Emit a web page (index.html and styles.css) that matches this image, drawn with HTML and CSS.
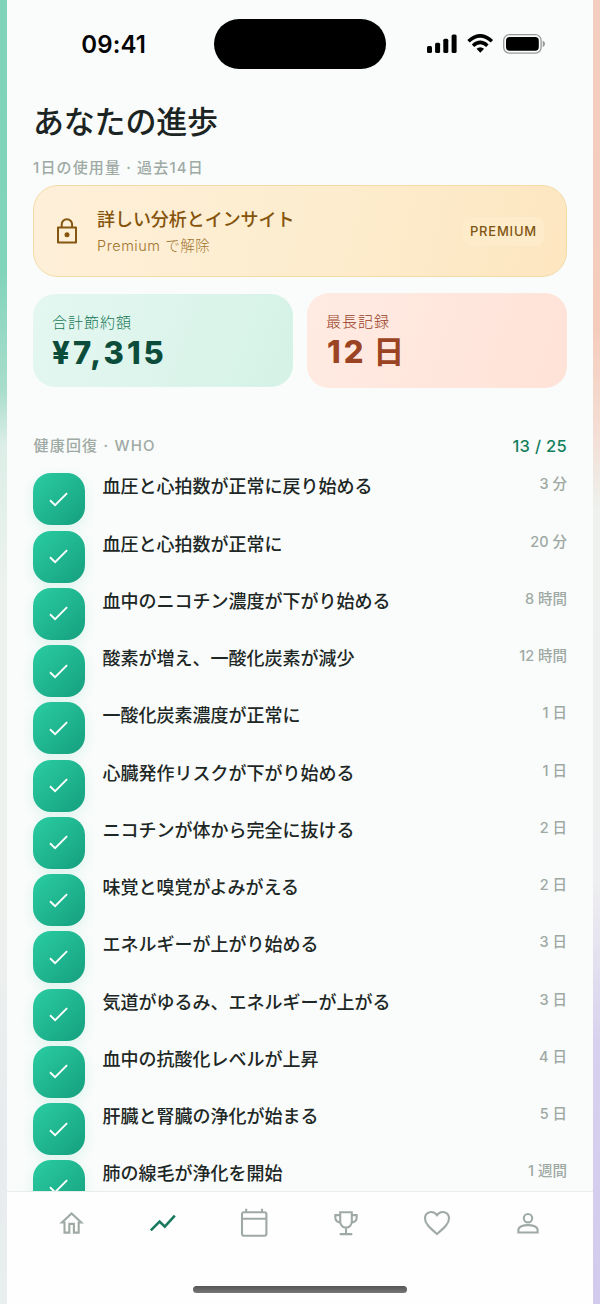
FILE: index.html
```html
<!DOCTYPE html>
<html lang="ja">
<head>
<meta charset="utf-8">
<title>あなたの進歩</title>
<link rel="stylesheet" href="styles.css">
</head>
<body>
<svg class="defs" aria-hidden="true"><symbol id="check" viewBox="0 0 20 16"><path d="M1 8.2 6.1 13.2 18.1 1.2" fill="none" stroke="#fff" stroke-width="1.9"/></symbol></svg>
<div class="phone">
  <header class="status">
    <div class="clock">09:41</div>
    <div class="island"></div>
    <div class="signals">
      <svg width="31" height="20" viewBox="0 0 31 20"><rect x="0" y="12" width="5" height="7" rx="1.5"/><rect x="8.1" y="8.7" width="5" height="10.3" rx="1.5"/><rect x="16.3" y="4.7" width="5" height="14.3" rx="1.5"/><rect x="24.6" y=".4" width="5" height="18.6" rx="1.5"/></svg>
      <svg class="wifi" width="27" height="20" viewBox="0 0 27 20"><path d="M1.5 7.2Q13.2-3.6 24.9 7.2M6 11.7Q13.2 5.2 20.4 11.7" fill="none" stroke="#000" stroke-width="3.5"/><path d="M9.5 14.8Q13.3 11.5 17.1 14.8L13.3 18.8Z"/></svg>
      <svg class="battery" width="43" height="20" viewBox="0 0 43 20"><rect x=".7" y=".7" width="37.4" height="18.4" rx="5.6" fill="none" stroke="#999" stroke-width="1.3"/><rect x="3" y="3" width="32.8" height="13.8" rx="3.7"/><path d="M39.7 6.8c3 .8 3 5.3 0 6.1z" fill="#999"/></svg>
    </div>
  </header>
  <main class="content">
    <h1 class="title">あなたの進歩</h1>
    <p class="subtitle">1日の使用量 · 過去14日</p>
    <section class="premium">
      <svg class="lock" width="20" height="26" viewBox="0 0 20 26"><path d="M1 9.6h18v14.8H1zM4.700 9.500V6.400a5.200 5.200 0 0 1 10.400 0v3.100" fill="none" stroke="#85560f" stroke-width="2" stroke-linejoin="round"/><circle cx="10" cy="16.8" r="2.5" fill="#85560f"/></svg>
      <div class="premium-copy">
        <div class="premium-title">詳しい分析とインサイト</div>
        <div class="premium-sub">Premium で解除</div>
      </div>
      <span class="badge">PREMIUM</span>
    </section>
    <section class="stats">
      <div class="stat saved"><div class="stat-label">合計節約額</div><div class="stat-value">¥7,315</div></div>
      <div class="stat record"><div class="stat-label">最長記録</div><div class="stat-value">12 <span class="unit">日</span></div></div>
    </section>
    <div class="section-head"><h2 class="section-title">健康回復 · WHO</h2><span class="count">13 / 25</span></div>
    <ul class="list">
      <li class="row"><span class="tile"><svg class="tick"><use href="#check"/></svg></span><span class="name">血圧と心拍数が正常に戻り始める</span><span class="time">3 分</span></li>
      <li class="row"><span class="tile"><svg class="tick"><use href="#check"/></svg></span><span class="name">血圧と心拍数が正常に</span><span class="time">20 分</span></li>
      <li class="row"><span class="tile"><svg class="tick"><use href="#check"/></svg></span><span class="name">血中のニコチン濃度が下がり始める</span><span class="time">8 時間</span></li>
      <li class="row"><span class="tile"><svg class="tick"><use href="#check"/></svg></span><span class="name">酸素が増え、一酸化炭素が減少</span><span class="time">12 時間</span></li>
      <li class="row"><span class="tile"><svg class="tick"><use href="#check"/></svg></span><span class="name">一酸化炭素濃度が正常に</span><span class="time">1 日</span></li>
      <li class="row"><span class="tile"><svg class="tick"><use href="#check"/></svg></span><span class="name">心臓発作リスクが下がり始める</span><span class="time">1 日</span></li>
      <li class="row"><span class="tile"><svg class="tick"><use href="#check"/></svg></span><span class="name">ニコチンが体から完全に抜ける</span><span class="time">2 日</span></li>
      <li class="row"><span class="tile"><svg class="tick"><use href="#check"/></svg></span><span class="name">味覚と嗅覚がよみがえる</span><span class="time">2 日</span></li>
      <li class="row"><span class="tile"><svg class="tick"><use href="#check"/></svg></span><span class="name">エネルギーが上がり始める</span><span class="time">3 日</span></li>
      <li class="row"><span class="tile"><svg class="tick"><use href="#check"/></svg></span><span class="name">気道がゆるみ、エネルギーが上がる</span><span class="time">3 日</span></li>
      <li class="row"><span class="tile"><svg class="tick"><use href="#check"/></svg></span><span class="name">血中の抗酸化レベルが上昇</span><span class="time">4 日</span></li>
      <li class="row"><span class="tile"><svg class="tick"><use href="#check"/></svg></span><span class="name">肝臓と腎臓の浄化が始まる</span><span class="time">5 日</span></li>
      <li class="row"><span class="tile"><svg class="tick"><use href="#check"/></svg></span><span class="name">肺の線毛が浄化を開始</span><span class="time">1 週間</span></li>
    </ul>
  </main>
  <nav class="tabs">
    <div class="tab-row">
      <a class="tab"><svg class="tab-icon" viewBox="0 0 32 32"><path d="M5.900 15.500h2.600v10.100h4.800v-8.700h4.600v8.700h4.800V15.500h2.600L15.600 6.400z"/></svg></a>
      <a class="tab active"><svg class="tab-icon" viewBox="0 0 32 32"><path d="m3.800 23.300 8.800-8.800 5.200 5.200L27.800 8.600" stroke-width="2.6"/></svg></a>
      <a class="tab"><svg class="tab-icon" viewBox="0 0 32 32"><rect x="4" y="5.2" width="24.4" height="23.6" rx="2"/><path d="M4 11.800h24.400M8.200 1.800v3.500M24 1.800v3.500"/></svg></a>
      <a class="tab"><svg class="tab-icon" viewBox="0 0 32 32"><path d="M10.200 5.200h11.600v9.600a5.800 5.800 0 0 1-11.600 0zM10.200 8.100H5.300v2.200c0 3.200 2 5 5.300 5.300M21.800 8.100h4.900v2.200c0 3.200-2 5-5.300 5.300M16 20.500v6.200M9.700 27.100h12.600"/></svg></a>
      <a class="tab"><svg class="tab-icon" viewBox="0 0 32 32"><path d="M16 27C8 20 4 16.400 4 11.500 4 4.700 12.200 2.700 16 8.100 19.800 2.700 28 4.700 28 11.500 28 16.400 24 20 16 27z"/></svg></a>
      <a class="tab"><svg class="tab-icon" viewBox="0 0 32 32"><circle cx="16" cy="11.2" r="4.2"/><path d="M6.400 25.500v-2.700c0-6.300 19.200-6.300 19.200 0v2.700z"/></svg></a>
    </div>
    <div class="home-bar"></div>
  </nav>
</div>
</body>
</html>
```
FILE: styles.css
```css
* { box-sizing: border-box; }
body {
  margin: 0;
  height: 1304px;
  overflow: hidden;
  padding: 0 7px;
  font-family: Inter, "Noto Sans CJK JP", sans-serif;
  background:
    linear-gradient(#7ed3b8 0, #80d4ba 270px, #a9ddcc 390px, #dceee7 445px, #edf2ee 590px, #eef1ee 900px, #e7ebee 1150px, #e9eeee 1304px) left / 50% 100% no-repeat,
    linear-gradient(#f3cdbf 0, #f5ccbc 330px, #f3ded5 435px, #eef1ee 510px, #eeeff0 880px, #d7d0ee 1050px, #d2cbed 1304px) right / 50% 100% no-repeat;
}
.defs { position: absolute; width: 0; height: 0; }
.phone { height: 1304px; display: flex; flex-direction: column; background: #f9fcfb; }
.status { flex: none; height: 88px; padding: 19px 47.5px 0 74.3px; display: flex; align-items: flex-start; }
.clock { width: 133px; font-size: 24px; line-height: 51px; font-weight: 600; letter-spacing: .1px; color: #050505; }
.island { width: 171.5px; height: 50px; border-radius: 25px; background: #000; }
.signals { margin-left: auto; padding-top: 15px; display: flex; }
.wifi { margin-left: 9px; }
.battery { margin-left: 9px; }
.content { flex: 1; min-height: 0; overflow: hidden; padding: 0 26px; }
.title { margin: 12px 0 0; font-size: 31px; line-height: 44px; font-weight: 500; letter-spacing: -.2px; color: #1b2422; }
.subtitle { margin: 13px 0 0; font-size: 15px; line-height: 22px; font-weight: 500; letter-spacing: 1.15px; color: #a0aaa5; }
.premium { margin-top: 6px; height: 92px; display: flex; align-items: center; padding: 0 22px 0 23px; border: 1px solid #f4dba6; border-radius: 25px; background: linear-gradient(105deg, #feefd9, #fdedcf 50%, #fde6c0); }
.lock { margin-right: 20px; }
.premium-copy { flex: 1; }
.premium-title { margin-top: 1px; font-size: 18px; line-height: 27px; font-weight: 500; letter-spacing: -.05px; color: #85540c; }
.premium-sub { font-size: 14.5px; line-height: 25px; font-weight: 300; letter-spacing: .55px; color: #a1752f; }
.badge { height: 29px; padding: 0 7px; border-radius: 8px; background: #fdebca; font-size: 13px; line-height: 29px; font-weight: 500; letter-spacing: .8px; color: #805614; }
.stats { margin-top: 16px; display: grid; grid-template-columns: 1fr 1fr; gap: 14px; align-items: center; }
.stat { height: 93px; padding: 18px 19px; border-radius: 22px; }
.saved { background: linear-gradient(110deg, #e4f7f1, #d5f2e6); color: #0c4c3b; }
.record { height: 95px; background: linear-gradient(110deg, #ffebe3, #ffe2d7); color: #9a4424; }
.stat-label { font-size: 15px; line-height: 22px; font-weight: 300; letter-spacing: 1px; color: #167856; }
.record .stat-label { color: #983d25; }
.stat-value { font-size: 31px; line-height: 38px; font-weight: 800; letter-spacing: 3px; white-space: nowrap; }
.record .stat-value { padding-left: 1px; letter-spacing: 3px; word-spacing: -3px; }
.unit { font-weight: 700; }
.section-head { margin-top: 45px; height: 25px; display: flex; justify-content: space-between; align-items: center; }
.section-title { margin: 0; padding-left: .5px; font-size: 15px; line-height: 25px; font-weight: 500; letter-spacing: 1.2px; color: #a0aaa5; }
.count { font-size: 16.5px; font-weight: 500; letter-spacing: .3px; color: #14805b; }
.list { list-style: none; margin: 15.3px 0 0; padding: 0; }
.row { height: 57.27px; display: flex; align-items: flex-start; }
.tile { flex: none; width: 52px; height: 52px; padding-top: 1px; display: grid; place-items: center; border-radius: 18px; background: linear-gradient(135deg, #2acda2, #159f7e); box-shadow: 0 4px 13px rgba(31, 184, 143, .12); }
.tick { width: 20px; height: 16px; }
.name { flex: 1; padding-left: 17.5px; font-size: 18px; line-height: 27px; font-weight: 500; color: #1d2725; }
.time { font-size: 14.5px; line-height: 21px; font-weight: 500; color: #9fa9a4; }
.tabs { flex: none; height: 113px; border-top: 1px solid #e7edeb; background: #fefefe; }
.tab-row { height: 62px; padding: 0 19px; display: grid; grid-template-columns: repeat(6, 1fr); align-items: center; justify-items: center; }
.tab { height: 32px; }
.tab-icon { display: block; width: 32px; height: 32px; fill: none; stroke: #a0aaa5; stroke-width: 2.1; }
.active .tab-icon { stroke: #18795e; }
.home-bar { width: 214px; height: 7px; margin: 32px auto 0; border-radius: 4px; background: linear-gradient(#555, #777); }
```
